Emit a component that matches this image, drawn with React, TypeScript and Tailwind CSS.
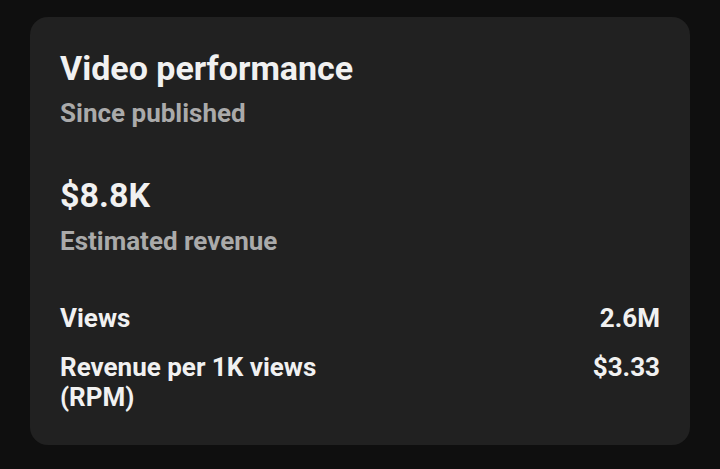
export default function App() {
  return (
    <div className="min-h-screen w-full bg-[#0f0f0f] px-[30px] pt-[17px] font-['Roboto',sans-serif]">
      <div className="h-[428px] w-[660px] rounded-[18px] bg-[#212121] px-[30px] pt-[31px]">
        <h1 className="text-[34px] leading-[40px] font-bold text-[#f1f1f1]">Video performance</h1>
        <p className="mt-[10px] text-[26px] leading-[30px] font-bold text-[#aaaaaa]">Since published</p>

        <p className="mt-[47px] text-[34px] leading-[40px] font-bold text-[#f1f1f1]">$8.8K</p>
        <p className="mt-[11px] text-[26px] leading-[30px] font-bold text-[#aaaaaa]">Estimated revenue</p>

        <div className="mt-[47px] flex flex-col gap-[19px] text-[26px] leading-[30px] font-bold text-[#f1f1f1]">
          <div className="flex justify-between">
            <span>Views</span>
            <span>2.6M</span>
          </div>
          <div className="flex justify-between">
            <span className="w-[300px]">Revenue per 1K views (RPM)</span>
            <span>$3.33</span>
          </div>
        </div>
      </div>
    </div>
  );
}
